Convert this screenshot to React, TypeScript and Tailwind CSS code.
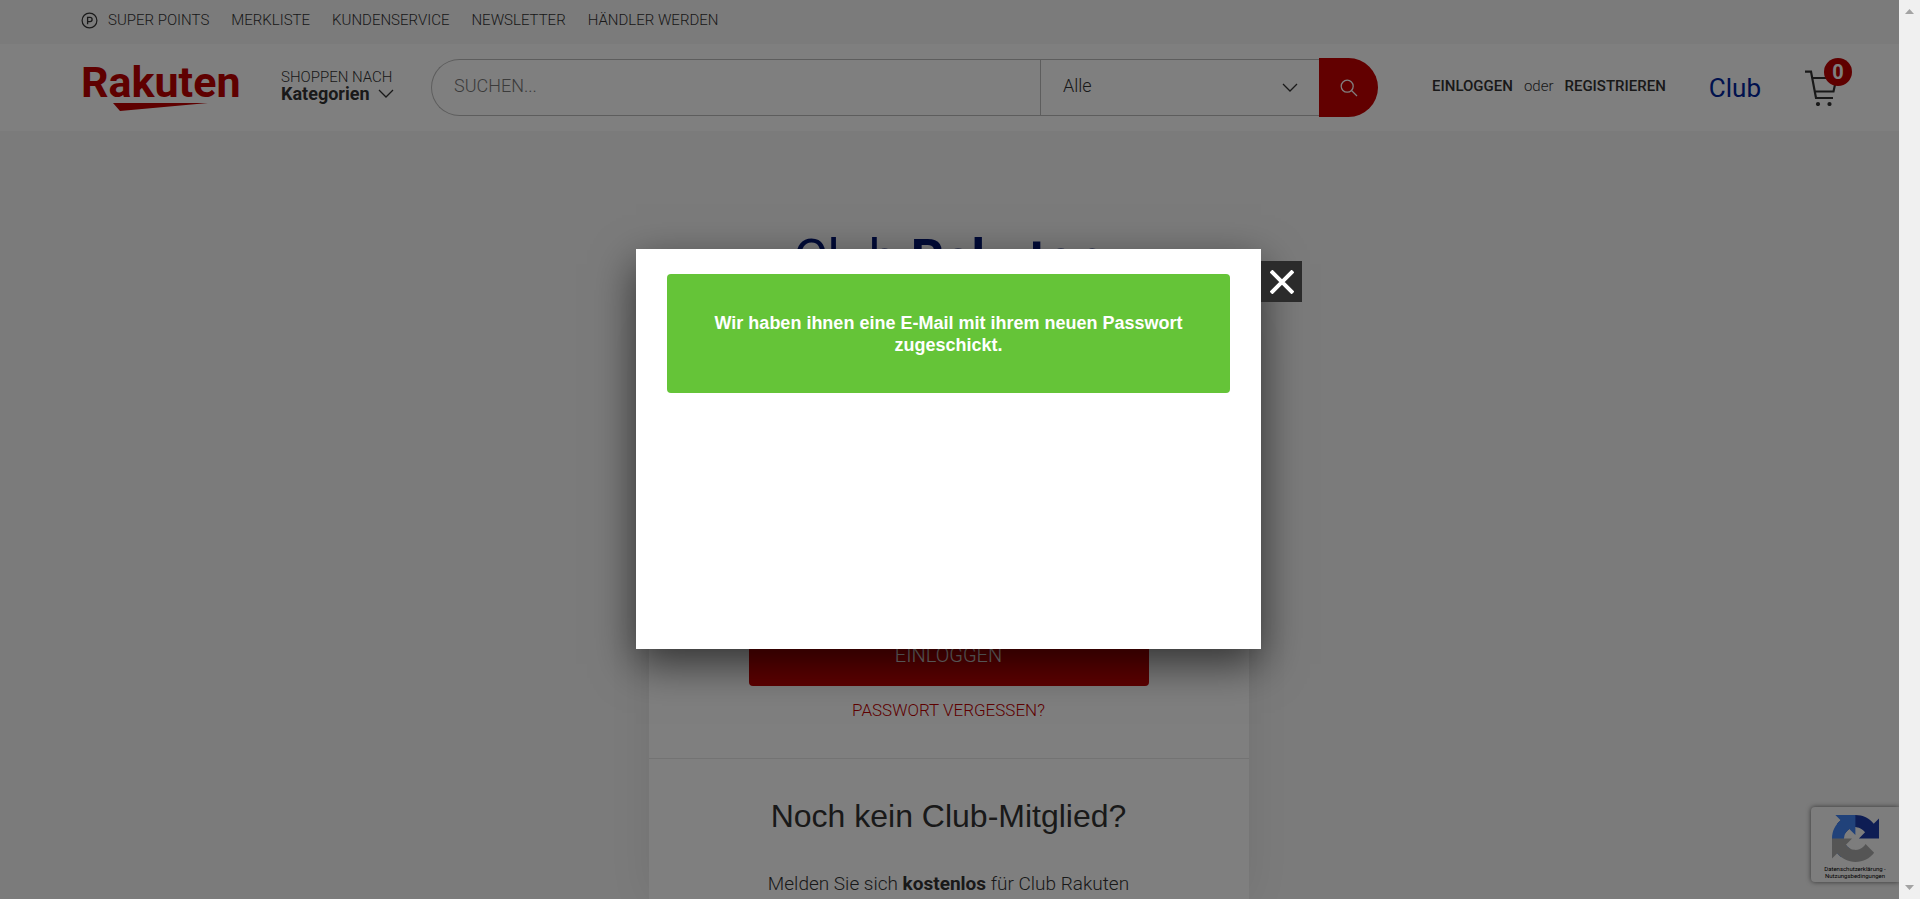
import React from "react";

const topLinks = ["MERKLISTE", "KUNDENSERVICE", "NEWSLETTER", "HÄNDLER WERDEN"];

function Chevron() {
  return (
    <svg className="h-[9px] w-4 shrink-0" viewBox="0 0 16 9" fill="none" stroke="#333" strokeWidth="1.3" aria-hidden="true">
      <path d="M1 1l7 7 7-7" />
    </svg>
  );
}

function TopBar() {
  return (
    <nav className="flex h-11 items-center gap-[22px] bg-[#f6f6f6] px-[81px] pb-1 text-[15px] font-light leading-5">
      <a href="#points" className="flex items-center gap-2.5">
        <svg className="size-[17px]" viewBox="0 0 17 17" fill="none" stroke="#333" aria-hidden="true">
          <circle cx="8.5" cy="8.5" r="7.4" strokeWidth="1.2" />
          <path d="M6.6 12.200V5.400h2.400a2 2 0 0 1 0 4.200H6.600" strokeWidth="1.300" />
        </svg>
        SUPER POINTS
      </a>
      {topLinks.map((label) => (
        <a key={label} href="#top">{label}</a>
      ))}
    </nav>
  );
}

function Logo() {
  return (
    <a href="#home" className="flex w-[158px] shrink-0 flex-col text-[#bf0000]">
      <span className="text-[43px] font-bold leading-9">Rakuten</span>
      <svg className="ml-8 mt-[3px] h-2 w-24" viewBox="0 0 96 8" fill="#bf0000" aria-hidden="true">
        <path d="M0 0h95L7 8z" />
      </svg>
    </a>
  );
}

function Search() {
  return (
    <form className="flex min-w-0 flex-1 items-center text-lg font-light" onSubmit={(e) => e.preventDefault()}>
      <div className="flex h-[57px] min-w-0 flex-1 rounded-l-full border border-r-0 border-[#bbb]">
        <input
          aria-label="Suchen"
          placeholder="SUCHEN..."
          className="min-w-0 flex-1 bg-transparent pb-1 pl-[22px] outline-none placeholder:text-[#777]"
        />
        <div className="relative flex w-[279px] items-center border-l border-[#bbb]">
          <select aria-label="Kategorie" className="h-full w-full appearance-none bg-transparent pb-1 pl-[22px] outline-none">
            <option>Alle</option>
          </select>
          <span className="pointer-events-none absolute right-[21px]">
            <Chevron />
          </span>
        </div>
      </div>
      <button aria-label="Suche starten" className="flex h-[59px] w-[59px] items-center justify-center rounded-r-full bg-[#c40000]">
        <svg className="size-[18px]" viewBox="0 0 18 18" fill="none" stroke="#fff" strokeWidth="1.3" aria-hidden="true">
          <circle cx="7.2" cy="7.2" r="6" />
          <path d="M11.5 11.5l5.5 5.5" />
        </svg>
      </button>
    </form>
  );
}

function Cart() {
  return (
    <a href="#cart" className="relative flex h-[60px] w-[47px] items-center">
      <svg className="h-9 w-8" viewBox="0 0 32 36" fill="none" stroke="#333" strokeWidth="2.2" aria-hidden="true">
        <path d="M0 1.6h6L11 28h17M7 8h24.5l-3 13.5H10" />
        <circle cx="13" cy="34" r="2.1" fill="#333" stroke="none" />
        <circle cx="24.500" cy="34" r="2.1" fill="#333" stroke="none" />
      </svg>
      <span className="absolute right-0 top-0 flex size-7 items-center justify-center rounded-full bg-[#bf0000] text-xl font-bold leading-7 text-white">
        0
      </span>
    </a>
  );
}

function Header() {
  return (
    <header className="flex h-[87px] items-center bg-white pl-[81px] pr-[47px]">
      <Logo />
      <button className="ml-[42px] w-[113px] shrink-0 pb-1 text-left">
        <span className="block text-[15px] font-light leading-4">SHOPPEN NACH</span>
        <span className="flex items-center justify-between text-lg font-bold leading-[18px]">
          Kategorien
          <Chevron />
        </span>
      </button>
      <div className="ml-[37px] flex min-w-0 flex-1">
        <Search />
      </div>
      <div className="ml-[54px] flex items-center gap-[11px] pb-[3px] text-[15px] leading-5">
        <a href="#login" className="font-medium">EINLOGGEN</a>
        <span className="font-light">oder</span>
        <a href="#register" className="font-medium">REGISTRIEREN</a>
      </div>
      <a href="#club" className="ml-[43px] mr-11 text-[26px] leading-8 text-[#00249c]">Club</a>
      <Cart />
    </header>
  );
}

function LoginPage() {
  return (
    <main className="flex flex-1 flex-col items-center bg-[#f6f6f6] pr-0.5 pt-[98px]">
      <h1 className="text-[52px] leading-[60px] text-[#00146e]">
        Club <b className="font-bold">Rakuten</b>
      </h1>
      <section className="mt-10 flex w-full max-w-[600px] flex-1 flex-col bg-white shadow-[0_0_40px_rgba(0,0,0,0.08)]">
        <div className="flex flex-col items-center border-b border-[#e6e6e6] px-[100px] pb-[37px] pt-[297px]">
          <button className="h-[60px] w-full rounded bg-[#bf0000] pb-0.5 text-xl font-light text-white">EINLOGGEN</button>
          <a href="#password" className="mt-[13px] text-[17px] font-light leading-[22px] text-[#bf0000]">PASSWORT VERGESSEN?</a>
        </div>
        <div className="flex flex-col items-center pt-[37px] text-center">
          <h2 className="font-['Liberation_Sans',sans-serif] text-[32px] leading-10">Noch kein Club-Mitglied?</h2>
          <p className="mt-9 text-[19px] font-light leading-6">
            Melden Sie sich <b className="font-bold">kostenlos</b> für Club Rakuten
          </p>
        </div>
      </section>
    </main>
  );
}

function Recaptcha() {
  return (
    <aside className="absolute bottom-[17px] right-0 flex h-[75px] w-[88px] flex-col items-center rounded-l-sm bg-[#fafafa] pt-2 shadow-[0_0_5px_#666]">
      <svg className="size-[47px]" viewBox="0 0 64 64" aria-hidden="true">
        <path fill="#1c3aa9" d="M64 31.955l-.033-1.370V4.687l-7.160 7.160C50.948 4.674 42.033.093 32.050.093c-10.389 0-19.622 4.960-25.458 12.640l11.736 11.860a15.550 15.550 0 0 1 4.754-5.334c2.050-1.600 4.952-2.906 8.968-2.906.485 0 .86.057 1.135.163 4.976.393 9.288 3.140 11.828 7.124l-8.307 8.307L64 31.953" />
        <path fill="#4285f4" d="M31.862.094l-1.370.033H4.594l7.160 7.160C4.580 13.147 0 22.060 0 32.046c0 10.388 4.960 19.622 12.640 25.458L24.500 45.768a15.550 15.550 0 0 1-5.334-4.754c-1.600-2.050-2.906-4.952-2.906-8.968 0-.485.057-.86.163-1.135.393-4.976 3.140-9.288 7.124-11.828l8.307 8.307L31.860.095" />
        <path fill="#ababab" d="M.001 32.045l.033 1.370v25.898l7.160-7.160c5.860 7.173 14.774 11.754 24.760 11.754 10.388 0 19.622-4.960 25.458-12.640l-11.736-11.860a15.550 15.550 0 0 1-4.754 5.334c-2.050 1.600-4.952 2.906-8.968 2.906-.485 0-.86-.057-1.135-.163-4.976-.393-9.288-3.140-11.828-7.124l8.307-8.307c-10.522.04-22.400.066-27.295-.005" />
      </svg>
      <p className="mt-[3px] text-center text-[6px] leading-[7px] text-black">
        Datenschutzerklärung -<br />Nutzungsbedingungen
      </p>
    </aside>
  );
}

function Modal() {
  return (
    <div className="absolute inset-0 flex items-center justify-center bg-black/50 pb-px pr-0.5">
      <div role="dialog" className="relative h-[400px] w-[625px] bg-white px-[31px] pt-[25px] shadow-[0_15px_40px_rgba(0,0,0,0.6)]">
        <p className="flex h-[119px] items-center justify-center rounded bg-[#65c438] px-10 text-center font-['Liberation_Sans',sans-serif] text-lg font-bold leading-[22px] text-white">
          Wir haben ihnen eine E-Mail mit ihrem neuen Passwort zugeschickt.
        </p>
        <button aria-label="Schließen" className="absolute left-full top-3 flex size-[41px] items-center justify-center bg-[#2b2b2b]">
          <svg className="size-6" viewBox="0 0 24 24" stroke="#fff" strokeWidth="4" aria-hidden="true">
            <path d="M1 1l22 22M23 1L1 23" />
          </svg>
        </button>
      </div>
    </div>
  );
}

function Scrollbar() {
  return (
    <div className="flex w-[21px] shrink-0 flex-col items-center justify-between bg-[#f0f0f0] py-[9px]" aria-hidden="true">
      <svg className="h-[5px] w-[9px]" viewBox="0 0 9 5" fill="#a3a3a3"><path d="M0 5l4.500-5L9 5z" /></svg>
      <svg className="h-[5px] w-[9px]" viewBox="0 0 9 5" fill="#a3a3a3"><path d="M0 0l4.500 5L9 0z" /></svg>
    </div>
  );
}

export default function App() {
  return (
    <div className="flex h-screen overflow-hidden font-[Roboto,sans-serif] text-[#333]">
      <div className="relative flex min-w-0 flex-1 flex-col overflow-hidden">
        <TopBar />
        <Header />
        <LoginPage />
        <Recaptcha />
        <Modal />
      </div>
      <Scrollbar />
    </div>
  );
}
